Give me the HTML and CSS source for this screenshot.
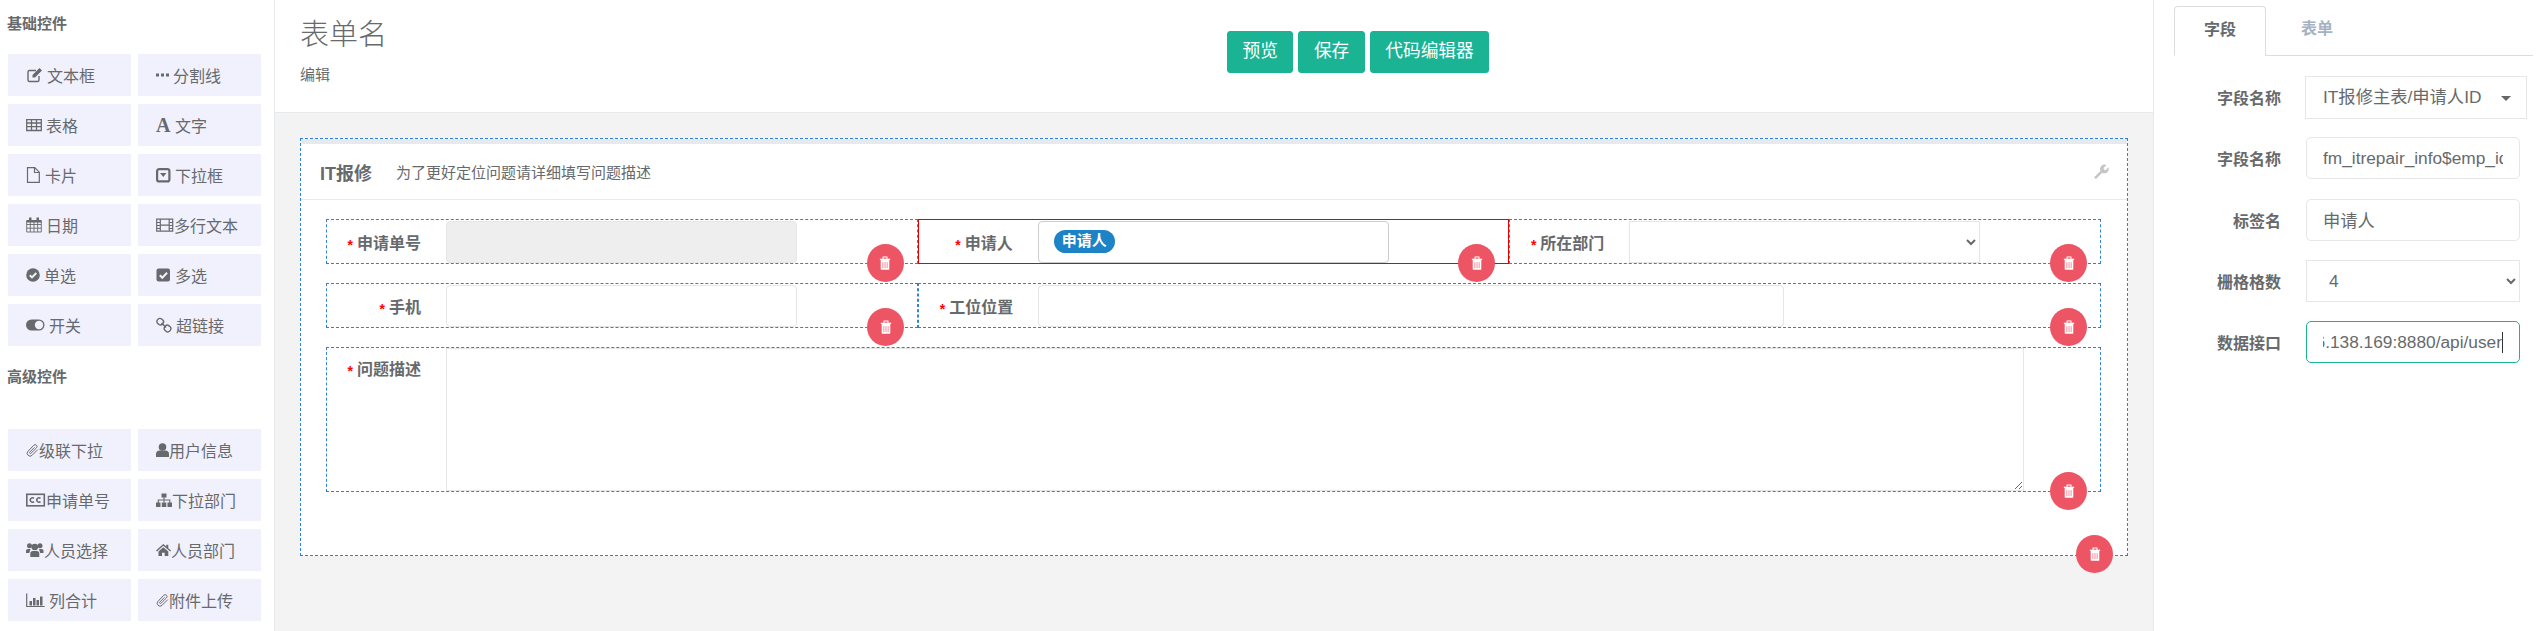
FILE: index.html
```html
<!DOCTYPE html>
<html lang="zh-CN">
<head>
  <meta charset="UTF-8" />
  <title>表单名</title>
  <link rel="stylesheet" href="styles.css">
</head>
<body>
  <svg class="defs" aria-hidden="true">
    <symbol id="i-trash" viewBox="0 0 14 16">
      <path d="M1 3h12v1.5H1z" fill="#fff"/>
      <path d="M4.7 3.5V1h4.6v2.5" fill="none" stroke="#fff" stroke-width="1.2"/>
      <path d="M2 4.5h10V15a1 1 0 0 1-1 1H3a1 1 0 0 1-1-1z" fill="#fff"/>
      <path d="M4.5 7v7M7 7v7M9.5 7v7" stroke="#f28a97" stroke-width="1.1"/>
    </symbol>
    <symbol id="i-clip" viewBox="0 0 16 16">
      <path d="M14.5 7.500 7.500 14.500a3.400 3.400 0 0 1-5-5L9.500 2.200a2.300 2.300 0 0 1 3.400 3.200L6.200 12a1 1 0 0 1-1.500-1.500L10.500 4.700" fill="none" stroke="currentColor" stroke-width="1.200"/>
    </symbol>
  </svg>

  <div class="page">
    <aside class="sidebar">
      <h5 class="side-title">基础控件</h5>
      <div class="tools">
        <div class="tool"><svg class="sp" width="17" height="16" viewBox="0 0 17 16"><path d="M13 9v4a1.500 1.500 0 0 1-1.500 1.500h-8A1.500 1.500 0 0 1 2 13V5a1.500 1.500 0 0 1 1.500-1.500H10" fill="none" stroke="currentColor" stroke-width="1.400"/><path d="M6.500 8 13.500 1 16 3.500l-7 7H6.500z" fill="currentColor"/></svg>文本框</div>
        <div class="tool"><svg class="sp" width="13" height="16" viewBox="0 0 13 16"><path d="M0 6.500h3v3H0zM5 6.500h3v3H5zM10 6.500h3v3h-3z" fill="currentColor"/></svg>分割线</div>
        <div class="tool"><svg class="sp" width="16" height="16" viewBox="0 0 16 16"><path d="M.7 2.700h14.600v10.800H.7zM.7 6h14.600M.7 9.700h14.600M5.500 3v10.500M10.500 3v10.500" fill="none" stroke="currentColor" stroke-width="1.300"/></svg>表格</div>
        <div class="tool"><span class="glyph-a">A</span>文字</div>
        <div class="tool"><svg class="sp" width="15" height="16" viewBox="0 0 15 16"><path d="M1.500.7h7.300l4.500 4.500v10.100H1.500zM8.500 1v4.500H13" fill="none" stroke="currentColor" stroke-width="1.200"/></svg>卡片</div>
        <div class="tool"><svg class="sp" width="15" height="16" viewBox="0 0 15 16"><rect x="1.100" y="2.100" width="12.300" height="12.300" rx="2" fill="none" stroke="currentColor" stroke-width="2.200"/><path d="M4 6h6.500l-3.250 4z" fill="currentColor"/></svg>下拉框</div>
        <div class="tool"><svg class="sp" width="16" height="16" viewBox="0 0 16 16"><path d="M.7 4h14.600v11H.7zM.7 7.500h14.600M.7 11.200h14.600M4.300 4v11M8 4v11M11.700 4v11" fill="none" stroke="currentColor" stroke-width=".9"/><path d="M.5 3h15v2.500H.5z M3 .5h2.500v3H3zM10.500.5H13v3h-2.500z" fill="currentColor"/></svg>日期</div>
        <div class="tool"><svg width="18" height="16" viewBox="0 0 18 16"><path d="M.7 2.200h16v12H.7zM4.300 2.200v12M13.200 2.200v12M4.300 8.200h8.900M.7 5.500h3.600M.7 8.500h3.600M.7 11.500h3.600M13.200 5.500h3.500M13.200 8.500h3.500M13.200 11.500h3.500" fill="none" stroke="currentColor" stroke-width="1.200"/></svg>多行文本</div>
        <div class="tool"><svg class="sp" width="14" height="16" viewBox="0 0 14 16"><circle cx="7" cy="8" r="6.800" fill="currentColor"/><path d="M3.800 8.200 6 10.400l4.300-4.400" fill="none" stroke="#f1f1fd" stroke-width="2"/></svg>单选</div>
        <div class="tool"><svg class="sp" width="15" height="16" viewBox="0 0 15 16"><rect x=".5" y="1.500" width="13.500" height="13" rx="2" fill="currentColor"/><path d="M3.800 8.200 6.300 10.700l4.800-5" fill="none" stroke="#f1f1fd" stroke-width="2"/></svg>多选</div>
        <div class="tool"><svg class="sp" width="19" height="16" viewBox="0 0 19 16"><rect y="2.500" width="18.500" height="11" rx="5.500" fill="currentColor"/><circle cx="13" cy="8" r="4.200" fill="#f1f1fd"/></svg>开关</div>
        <div class="tool"><svg class="sp" width="16" height="16" viewBox="0 0 16 16"><rect x="1" y="1.500" width="6.500" height="6" rx="2.700" fill="none" stroke="currentColor" stroke-width="1.400" transform="rotate(40 4 4.500)"/><rect x="8.300" y="8.500" width="6.500" height="6" rx="2.700" fill="none" stroke="currentColor" stroke-width="1.400" transform="rotate(40 11.500 11.500)"/><path d="M5.500 6 10 10.500" stroke="currentColor" stroke-width="1.500"/></svg>超链接</div>
      </div>

      <h5 class="side-title second">高级控件</h5>
      <div class="tools">
        <div class="tool"><svg width="13" height="16"><use href="#i-clip"/></svg>级联下拉</div>
        <div class="tool"><svg width="13" height="16" viewBox="0 0 13 16"><circle cx="6.500" cy="5" r="3.800" fill="currentColor"/><path d="M0 15v-3c0-2 1.500-3.500 3.500-3.500h6c2 0 3.500 1.500 3.500 3.500v3z" fill="currentColor"/></svg>用户信息</div>
        <div class="tool"><svg width="20" height="16" viewBox="0 0 20 16"><rect x=".8" y="2.300" width="17.500" height="11.500" fill="none" stroke="currentColor" stroke-width="1.600"/><path d="M8 6.400a2.200 2.200 0 1 0 0 3.200M14.500 6.400a2.200 2.200 0 1 0 0 3.200" fill="none" stroke="currentColor" stroke-width="1.500"/></svg>申请单号</div>
        <div class="tool"><svg width="16" height="16" viewBox="0 0 16 16"><path d="M5.500 1.500h5v4h-5zM0 10.500h4.500v4.500H0zM5.800 10.500h4.500v4.500H5.800zM11.500 10.500H16v4.500h-4.500z" fill="currentColor"/><path d="M8 5v5.500M2.300 11V8h11.500v3" fill="none" stroke="currentColor" stroke-width="1.100"/></svg>下拉部门</div>
        <div class="tool"><svg width="18" height="16" viewBox="0 0 18 16"><circle cx="3.500" cy="3.800" r="2.500" fill="currentColor"/><circle cx="14" cy="3.800" r="2.500" fill="currentColor"/><circle cx="8.800" cy="5" r="3.300" fill="currentColor"/><path d="M0 11V8.500Q0 7 2 7h2.500L3.300 11zM17.500 11V8.500q0-1.500-2-1.500H13l1.200 4zM4.300 15v-3.500q0-2.500 2.500-2.500h4q2.500 0 2.500 2.500V15z" fill="currentColor"/></svg>人员选择</div>
        <div class="tool"><svg width="15" height="16" viewBox="0 0 15 16"><path d="M0 8.500 7.300 2l3 2.600V2.800h2v3.500l2.700 2.200-.8 1L7.300 3.800 1 9.500z" fill="currentColor"/><path d="M2.500 9.500l4.800-4.200 5 4.200V14H8.700v-3.200H6V14H2.500z" fill="currentColor"/></svg>人员部门</div>
        <div class="tool"><svg class="sp" width="19" height="16" viewBox="0 0 19 16"><path d="M.7 1.500v13h18" fill="none" stroke="currentColor" stroke-width="1.200"/><path d="M3.500 9h2.500v4.500H3.500zM7 6h2.500v7.500H7zM10.500 8h2.500v5.500h-2.500zM14 4.500h2.500v9H14z" fill="currentColor"/></svg>列合计</div>
        <div class="tool"><svg width="13" height="16"><use href="#i-clip"/></svg>附件上传</div>
      </div>
    </aside>

    <main class="main">
      <header class="main-head">
        <div class="head-title">
          <h2>表单名</h2>
          <small>编辑</small>
        </div>
        <div class="head-btns">
          <button class="btn">预览</button>
          <button class="btn">保存</button>
          <button class="btn">代码编辑器</button>
        </div>
      </header>

      <section class="canvas">
        <div class="box">
          <div class="box-title">
            <b>IT报修</b>
            <span class="box-sub">为了更好定位问题请详细填写问题描述</span>
            <svg class="wrench" width="16" height="16" viewBox="0 0 16 16"><path d="M1 13.500 7.500 7a4.500 4.500 0 0 1 6-6L10.500 4l.5 1.700 1.700.5L15.500 3.300a4.500 4.500 0 0 1-6.300 5.500L3 15z" fill="#c4c4c4"/></svg>
          </div>

          <div class="form-body">
            <div class="row">
              <div class="cell">
                <label class="lbl"><i>*</i>申请单号</label>
                <div class="ctl ctl-third ctl-off"></div>
                <button class="del"><svg width="12" height="14"><use href="#i-trash"/></svg></button>
              </div>
              <div class="cell cell-on">
                <label class="lbl"><i>*</i>申请人</label>
                <div class="ctl ctl-third ctl-dark"><span class="tag">申请人</span></div>
                <button class="del"><svg width="12" height="14"><use href="#i-trash"/></svg></button>
              </div>
              <div class="cell">
                <label class="lbl"><i>*</i>所在部门</label>
                <select class="ctl ctl-third ctl-select"><option></option></select>
                <button class="del"><svg width="12" height="14"><use href="#i-trash"/></svg></button>
              </div>
            </div>

            <div class="row">
              <div class="cell">
                <label class="lbl"><i>*</i>手机</label>
                <input class="ctl ctl-third" type="text">
                <button class="del"><svg width="12" height="14"><use href="#i-trash"/></svg></button>
              </div>
              <div class="cell cell-wide">
                <label class="lbl"><i>*</i>工位位置</label>
                <input class="ctl ctl-wide" type="text">
                <button class="del"><svg width="12" height="14"><use href="#i-trash"/></svg></button>
              </div>
            </div>

            <div class="row row-tall">
              <div class="cell cell-full">
                <label class="lbl lbl-top"><i>*</i>问题描述</label>
                <textarea class="area"></textarea>
                <button class="del del-round"><svg width="12" height="14"><use href="#i-trash"/></svg></button>
              </div>
            </div>
          </div>

          <button class="del del-box"><svg width="12" height="14"><use href="#i-trash"/></svg></button>
        </div>
      </section>
    </main>

    <aside class="props">
      <ul class="tabs">
        <li class="tab tab-on">字段</li>
        <li class="tab">表单</li>
      </ul>
      <div class="prop-form">
        <div class="prop"><label>字段名称</label><div class="fake-select">IT报修主表/申请人ID<span class="caret"></span></div></div>
        <div class="prop"><label>字段名称</label><input class="prop-ctl" type="text" value="fm_itrepair_info$emp_id"></div>
        <div class="prop"><label>标签名</label><input class="prop-ctl" type="text" value="申请人"></div>
        <div class="prop"><label>栅格格数</label><select class="prop-ctl prop-select"><option>4</option></select></div>
        <div class="prop"><label>数据接口</label><div class="prop-ctl prop-focus"><div class="scroll-end"><span class="typed">6.138.169:8880/api/user</span></div></div></div>
      </div>
    </aside>
  </div>
</body>
</html>
```

FILE: styles.css
```css
* { box-sizing: border-box; }
html, body { margin: 0; height: 100%; }
body { font-family: "Liberation Sans", "Noto Sans CJK SC", sans-serif; font-size: 16px; color: #676a6c; overflow: hidden; }
.defs { display: none; }
.page { display: flex; height: 631px; }

/* left tool list */
.sidebar { width: 275px; flex: none; border-right: 1px solid #e7eaec; background: #fff; padding-left: 8px; }
.side-title { margin: 0 0 0 -1px; height: 54px; line-height: 48px; font-size: 15px; font-weight: 700; }
.side-title.second { height: 83px; margin-top: 0; padding-top: 8px; line-height: 46px; }
.tools { display: grid; grid-template-columns: 123px 123px; grid-auto-rows: 42px; column-gap: 7px; row-gap: 8px; }
.tool { display: flex; align-items: center; background: #f1f1fd; padding-left: 18px; white-space: nowrap; }
.tool svg { flex: none; }
.tool .sp { margin-right: 4px; }
.glyph-a { width: 15px; margin-right: 4px; font-family: "Liberation Serif", serif; font-weight: 700; font-size: 20px; line-height: 1; }

/* center */
.main { flex: 1; min-width: 0; background: #f3f3f4; border-right: 1px solid #e7eaec; }
.main-head { height: 113px; background: #fff; border-bottom: 1px solid #e7eaec; display: flex; }
.head-title { width: 952px; padding: 16px 0 0 25px; }
.head-title h2 { margin: 0; font-size: 29px; font-weight: 300; line-height: 38px; }
.head-title small { display: block; margin-top: 11px; font-size: 15px; line-height: 20px; }
.head-btns { display: flex; gap: 5px; padding-top: 31px; align-items: flex-start; }
.btn { height: 42px; padding: 0 14.5px; border: 1px solid #1ab394; border-radius: 3px; background: #1ab394; color: #fff; font: inherit; font-size: 17.7px; line-height: 1; }

.canvas { padding: 25px 25px 0; }
.box { position: relative; height: 418px; border: 1px dashed #2f7fe0; background: #fff; }
.box-title { display: flex; align-items: center; height: 61px; border-top: 5px solid #e7eaec; border-bottom: 1px solid #e7eaec; padding: 0 18px 0 19px; }
.box-title b { font-size: 18px; }
.box-sub { margin-left: 24px; font-size: 15px; }
.wrench { margin-left: auto; }

.form-body { padding: 19px 26px 0 25px; display: flex; flex-direction: column; gap: 19px; }
.row { display: flex; height: 45px; }
.row-tall { height: 145px; }
.cell { position: relative; flex: 1 1 0; min-width: 0; display: flex; align-items: center; border: 1px dashed #2f7fe0; }
.cell-wide { flex: 2 1 0; }
.cell-full { align-items: flex-start; }
.cell-on { border: 1px solid #e60000; }
.lbl { width: 94px; flex: none; text-align: right; font-weight: 600; }
.lbl i { color: #f00; font-style: normal; font-size: 14px; margin-right: 4px; vertical-align: -1px; }
.lbl-top { padding-top: 8px; }

.ctl { height: 42px; margin-left: 25px; padding: 0 15px; border: 1px solid #e5e6e7; border-radius: 4px; background: #fff; font: inherit; color: inherit; display: flex; align-items: center; }
.ctl-third { width: 351px; }
.ctl-wide { width: 746px; }
.ctl-off { background: #eee; }
.ctl-dark { border-color: #ccc; }
.ctl-select { border-radius: 0; }
.tag { height: 23px; line-height: 22px; padding: 0 8px; border-radius: 12px; background: #1c84c6; color: #fff; font-size: 15px; font-weight: 700; }
.area { width: 1578px; height: 143px; margin-left: 25px; border: 1px solid #e5e6e7; background: #fff; font: inherit; display: block; }

.del { position: absolute; right: 13px; bottom: -19px; width: 37px; height: 38px; padding: 0; border: 0; border-radius: 50%; background: #ed5565; display: flex; align-items: center; justify-content: center; z-index: 2; }
.del-box { right: 14px; bottom: -18px; }

/* right props */
.props { width: 388px; flex: none; background: #fff; padding: 6px 9px 0 20px; }
.tabs { list-style: none; margin: 0; padding: 0; display: flex; gap: 5px; height: 50px; border-bottom: 1px solid #ddd; }
.tab { width: 92px; height: 50px; line-height: 46px; text-align: center; font-weight: 600; color: #a7b1c2; }
.tab-on { color: #676a6c; border: 1px solid #ddd; border-bottom-color: #fff; border-radius: 4px 4px 0 0; }
.prop-form { padding-top: 20px; display: flex; flex-direction: column; gap: 19.25px; }
.prop { display: flex; align-items: center; height: 42px; }
.prop label { width: 107px; flex: none; text-align: right; font-weight: 600; }
.prop-ctl { width: 214px; height: 42px; margin-left: 25px; padding: 0 16px; border: 1px solid #e5e6e7; border-radius: 5px; background: #fff; font: inherit; font-size: 17.3px; color: inherit; }
.prop-select { border-radius: 0; padding-left: 18px; }
.fake-select { position: relative; width: 222px; height: 43px; margin-left: 24px; padding-left: 17px; line-height: 41px; font-size: 17.3px; border: 1px solid #e5e6e7; white-space: nowrap; }
.caret { position: absolute; right: 15px; top: 19px; border-left: 5px solid transparent; border-right: 5px solid transparent; border-top: 5px solid #666; }
.prop-focus { border-color: #1ab394; display: flex; align-items: center; }
.scroll-end { width: 100%; overflow: hidden; display: flex; justify-content: flex-end; white-space: nowrap; }
.typed { flex: none; border-right: 1px solid #333; }
```
